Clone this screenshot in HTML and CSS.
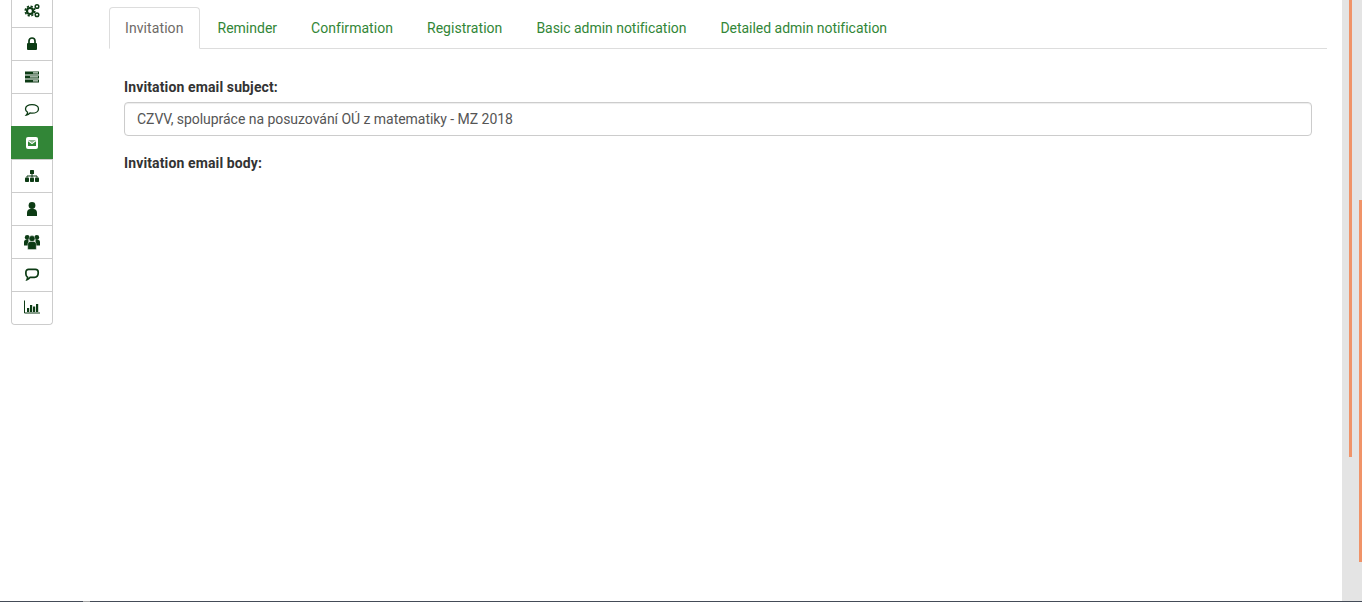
FILE: index.html
```html
<!DOCTYPE html>
<html lang="en">
<head>
<meta charset="utf-8">
<title>Invitation email</title>
<link rel="stylesheet" href="styles.css">
</head>
<body>
<div class="page">
  <nav class="side">
    <a class="side-item side-first"><svg class="ico" width="16" height="16" viewBox="0 0 16 16"><circle cx="6" cy="8" r="3" fill="none" stroke="#0c3b14" stroke-width="2.2"/><circle cx="6" cy="8" r="4.800" fill="none" stroke="#0c3b14" stroke-width="1.600" stroke-dasharray="2.200 1.570"/><circle cx="13" cy="3.500" r="1.800" fill="none" stroke="#0c3b14" stroke-width="1.500"/><circle cx="13" cy="11.700" r="1.800" fill="none" stroke="#0c3b14" stroke-width="1.500"/></svg></a>
    <a class="side-item"><svg class="ico" width="16" height="16" viewBox="0 0 16 16"><path d="M5 8V5a3 3 0 0 1 6 0v3" fill="none" stroke="#0c3b14" stroke-width="1.700"/><rect x="3" y="7" width="10" height="7" rx="1" fill="#0c3b14"/></svg></a>
    <a class="side-item"><svg class="ico" width="16" height="16" viewBox="0 0 16 16"><path d="M1 2.500h14v3H1zM1 6.500h14v3H1zM1 10.500h14v3H1z" fill="#0c3b14"/><path d="M9 3.900h5M6 7.900h8M9 11.900h5" stroke="#fff" stroke-width="1"/></svg></a>
    <a class="side-item"><svg class="ico" width="16" height="16" viewBox="0 0 16 16"><path d="M8 2.600c3.800 0 6.500 1.800 6.500 4.300s-2.700 4.300-6.500 4.300c-.7 0-1.400-.1-2-.2-.9.9-2 1.700-3.600 2 .7-.8 1.100-1.700 1.200-2.700-1.300-.8-2.100-2-2.100-3.400 0-2.500 2.700-4.300 6.500-4.300z" fill="none" stroke="#0c3b14" stroke-width="1.300"/></svg></a>
    <a class="side-item side-active"><svg class="ico" width="16" height="16" viewBox="0 0 16 16"><rect x="2" y="2" width="12" height="12" rx="2" fill="#fff"/><path d="M4 5h8L8 8z" fill="#8fb592"/><path d="M4 6.200l4 3 4-3V11H4z" fill="#328637"/></svg></a>
    <a class="side-item"><svg class="ico" width="16" height="16" viewBox="0 0 16 16"><rect x="6" y="2" width="4" height="4" rx=".6" fill="#0c3b14"/><path d="M8 6v3M3 9.500V8h10v1.500" fill="none" stroke="#0c3b14" stroke-width="1"/><rect x="1" y="9.500" width="4" height="4.500" rx=".8" fill="#0c3b14"/><rect x="6" y="9.500" width="4" height="4.500" rx=".8" fill="#0c3b14"/><rect x="11" y="9.500" width="4" height="4.500" rx=".8" fill="#0c3b14"/></svg></a>
    <a class="side-item"><svg class="ico" width="16" height="16" viewBox="0 0 16 16"><circle cx="8" cy="4.500" r="3.400" fill="#0c3b14"/><path d="M3 15v-3.200C3 9.500 4.500 8 6.200 8h3.600C11.500 8 13 9.500 13 11.800V15z" fill="#0c3b14"/></svg></a>
    <a class="side-item"><svg class="ico" width="16" height="16" viewBox="0 0 16 16"><circle cx="3.200" cy="3.500" r="2.400" fill="#0c3b14"/><circle cx="12.800" cy="3.500" r="2.400" fill="#0c3b14"/><path d="M0 11.500V8.200C0 6.600 1.200 5.800 2.500 5.800h2v5.700zM16 11.500V8.200c0-1.600-1.200-2.400-2.500-2.400h-2v5.700z" fill="#0c3b14"/><circle cx="8" cy="4.600" r="3" fill="#0c3b14" stroke="#fff" stroke-width=".4"/><path d="M3.700 15.500v-5C3.700 8.500 5.200 7.500 6.600 7.500h2.800c1.400 0 2.900 1 2.900 3v5z" fill="#0c3b14" stroke="#fff" stroke-width=".4"/></svg></a>
    <a class="side-item"><svg class="ico" width="16" height="16" viewBox="0 0 16 16"><path d="M4.600 2.300h6.800c1.700 0 2.800 1.100 2.800 2.700v1c0 2.500-1.500 4.300-3.800 4.300H6.200c-.8 1-1.800 2.100-3.200 2.500.4-.9.600-1.800.6-2.600-1-.5-1.700-1.800-1.700-3.200V5c0-1.600 1.100-2.700 2.700-2.700z" fill="none" stroke="#0c3b14" stroke-width="1.700"/></svg></a>
    <a class="side-item side-last"><svg class="ico ico-chart" width="16" height="16" viewBox="0 0 16 16"><path d="M.5 1.500v12.500h15.500" fill="none" stroke="#0c3b14" stroke-width="1"/><path d="M3 9h2.200v4H3zM6 6h2.200v7H6zM9 7.500h2.200V13H9zM12 5h2.200v8H12z" fill="#0c3b14"/></svg></a>
  </nav>
  <main class="main">
    <ul class="tabs">
      <li class="tab tab-active"><a class="ls-wide">Invitation</a></li>
      <li class="tab"><a>Reminder</a></li>
      <li class="tab"><a class="ls-mid">Confirmation</a></li>
      <li class="tab"><a class="ls-mid">Registration</a></li>
      <li class="tab"><a class="ls-tight">Basic admin notification</a></li>
      <li class="tab"><a class="ls-tight">Detailed admin notification</a></li>
    </ul>
    <form class="panel">
      <label class="field-label" for="subject">Invitation email subject:</label>
      <input class="field-input" id="subject" type="text" value="CZVV, spolupráce na posuzování OÚ z matematiky - MZ 2018">
      <label class="field-label">Invitation email body:</label>
    </form>
  </main>
  <div class="gutter">
    <div class="thumb thumb-a"></div>
    <div class="thumb thumb-b"></div>
  </div>
</div>
<div class="baseline"><span class="baseline-mark"></span></div>
</body>
</html>
```

FILE: styles.css
```css
* { box-sizing: border-box; }
html, body { margin: 0; padding: 0; height: 602px; overflow: hidden; background: #fff; }
body { font-family: Roboto, "Liberation Sans", sans-serif; font-size: 14px; line-height: 20px; color: #333; }

.page { display: flex; height: 601px; }

.side {
  flex: none; width: 42px; margin-left: 11px; align-self: flex-start;
  display: flex; flex-direction: column;
  border: 1px solid #ccc; border-top: 0; border-radius: 0 0 4px 4px;
}
.side-item {
  height: 33px; display: flex; align-items: center; justify-content: center;
  border-top: 1px solid #ccc; background: #fff;
}
.side-first { height: 27px; border-top: 0; padding-bottom: 5px; }
.side-last { border-radius: 0 0 4px 4px; padding-bottom: 2px; }
.side-active { background: #328637; border-top-color: #328637; margin: 0 -1px; }
.ico { display: block; }

.main { flex: 1; min-width: 0; margin: 0 15px 0 56px; padding-top: 7px; }

.tabs { list-style: none; margin: 0; padding: 0; display: flex; border-bottom: 1px solid #ddd; }
.tab { margin: 0 2px -1px 0; }
.tab a {
  display: block; padding: 10px 15px; line-height: 20px;
  border: 1px solid transparent; border-radius: 4px 4px 0 0;
  color: #328637;
}
.tab a.ls-wide { letter-spacing: .09px; }
.tab a.ls-mid { letter-spacing: .04px; }
.tab a.ls-tight { letter-spacing: -.03px; }
.tab-active a { color: #6e6a66; background: #fff; border-color: #ddd #ddd #fff; }

.panel { padding: 28px 15px 0; display: flex; flex-direction: column; }
.field-label { font-weight: 700; color: #333; margin-bottom: 5px; letter-spacing: .125px; }
.field-input {
  height: 34px; width: 100%; margin-bottom: 17px; padding: 6px 12px;
  font: inherit; letter-spacing: -.04px; color: #555; background: #fff;
  border: 1px solid #ccc; border-radius: 4px;
  box-shadow: inset 0 1px 1px rgba(0, 0, 0, .075);
}

.gutter { flex: none; width: 20px; background: #e4e4e4; display: grid; grid-template-columns: 7px 3px 7px 3px; align-items: start; }
.thumb { background: #f09368; }
.thumb-a { grid-column: 2; grid-row: 1; height: 457px; }
.thumb-b { grid-column: 4; grid-row: 1; height: 362px; margin-top: 200px; }

.baseline { height: 1px; background: #444b57; padding-left: 83px; }
.baseline-mark { display: block; width: 7px; height: 1px; background: #a8a8a8; }
```
